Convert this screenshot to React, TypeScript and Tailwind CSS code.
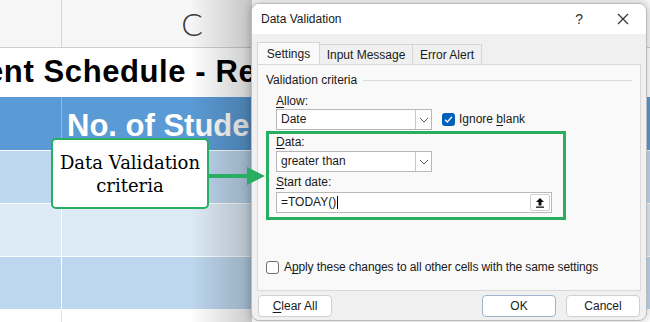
import React from "react";

const ui = { fontFamily: '"Liberation Sans", Arial, sans-serif' };
const sheetFont = { fontFamily: '"Liberation Sans", Arial, sans-serif' };

function Chevron() {
  return (
    <svg width="10" height="6" viewBox="0 0 10 6" fill="none">
      <path d="M1 1l4 4 4-4" stroke="#606060" strokeWidth="1" />
    </svg>
  );
}

function Select({ value, width }: { value: string; width: number }) {
  return (
    <div
      className="flex h-[21px] items-stretch border border-[#b8b8b8] bg-white"
      style={{ width }}
    >
      <span className="flex flex-1 items-center pl-[4px] text-[12px] text-[#1a1a1a]">
        {value}
      </span>
      <span className="flex w-[16px] items-center justify-center border-l border-[#c8c8c8]">
        <Chevron />
      </span>
    </div>
  );
}

function U({ children }: { children: React.ReactNode }) {
  return <span className="underline underline-offset-2">{children}</span>;
}

function Sheet() {
  return (
    <div className="flex h-full flex-col" style={sheetFont}>
      {/* column header */}
      <div className="flex h-[48px] border-b border-[#cfcfcf] bg-[#f6f6f6]">
        <div className="w-[62px] border-r border-[#d6d6d6]" />
        <div
          className="flex w-[260px] items-center justify-center text-[32px] font-light text-[#3a3a3a]"
          style={{ fontFamily: 'Lato, sans-serif' }}
        >
          C
        </div>
      </div>
      {/* title row */}
      <div className="flex h-[49px] items-center overflow-hidden bg-white">
        <span className="-ml-[14px] shrink-0 whitespace-nowrap text-[31px] font-bold tracking-[0.6px] text-black">
          ent Schedule - Report
        </span>
      </div>
      {/* header row */}
      <div className="flex h-[53px] overflow-hidden bg-[#5b9bd5]">
        <div className="w-[62px] shrink-0 border-r border-[#8dbbe5]" />
        <span className="shrink-0 pl-[5px] pt-[6px] whitespace-nowrap text-[31px] font-bold text-white">
          No. of Students
        </span>
      </div>
      {["bg-[#bdd7ee]", "bg-[#ddebf7]", "bg-[#bdd7ee]"].map((c, i) => (
        <div key={i} className={`flex h-[53px] border-t border-white ${c}`}>
          <div className="w-[62px] border-r border-white" />
        </div>
      ))}
      <div className="flex flex-1 border-t border-white bg-white">
        <div className="w-[62px] border-r border-[#e2e2e2]" />
      </div>
    </div>
  );
}

function Dialog() {
  return (
    <div
      className="absolute left-[251px] top-[3px] flex h-[318px] w-[396px] flex-col overflow-hidden rounded-[8px] border border-[#bdbdbd] bg-[#f0f0f0] shadow-[0_0_10px_rgba(0,0,0,0.25)]"
      style={ui}
    >
      {/* title bar */}
      <div className="flex h-[30px] items-center bg-white pl-[9px] text-[12px] text-[#1a1a1a]">
        <span className="flex-1">Data Validation</span>
        <span className="mr-[34px] text-[14px] text-[#333]">?</span>
        <svg className="mr-[17px]" width="12" height="12" viewBox="0 0 12 12">
          <path d="M1 1l10 10M11 1L1 11" stroke="#333" strokeWidth="1.2" />
        </svg>
      </div>

      {/* tabs */}
      <div className="mt-[8px] flex pl-[5px] text-[12px] text-[#1a1a1a]">
        <div className="relative z-10 mb-[-1px] flex h-[22px] w-[63px] items-center justify-center border border-b-0 border-[#d6d6d6] bg-[#f9f9f9]">
          Settings
        </div>
        <div className="mt-[2px] flex h-[20px] w-[93px] items-center justify-center border border-l-0 border-b-0 border-[#d6d6d6]">
          Input Message
        </div>
        <div className="mt-[2px] flex h-[20px] w-[69px] items-center justify-center border border-l-0 border-b-0 border-[#d6d6d6]">
          Error Alert
        </div>
      </div>

      {/* panel */}
      <div className="mx-[5px] flex h-[227px] flex-col border border-[#d9d9d9] bg-[#f9f9f9] pl-[8px] text-[12px] leading-[15px] text-[#1a1a1a]">
        <div className="mt-[8px] flex items-center pr-[8px]">
          <span>Validation criteria</span>
          <div className="ml-[6px] h-px flex-1 bg-[#d9d9d9]" />
        </div>

        <div className="ml-[10px] mt-[6px]">
          <U>A</U>llow:
        </div>
        <div className="ml-[10px] flex items-center">
          <Select value="Date" width={156} />
          <span className="ml-[10px] flex h-[13px] w-[13px] items-center justify-center rounded-[3px] bg-[#005fb8]">
            <svg width="9" height="9" viewBox="0 0 9 9" fill="none">
              <path d="M1 4.8l2.3 2.2L8 1.8" stroke="#fff" strokeWidth="1.3" />
            </svg>
          </span>
          <span className="ml-[4px]">
            Ignore <U>b</U>lank
          </span>
        </div>

        <div className="mt-[1px] flex h-[89px] w-[300px] flex-col border-[3px] border-[#27ae60] pl-[7px]">
          <div className="mt-px">
            <U>D</U>ata:
          </div>
          <div className="mt-px">
            <Select value="greater than" width={156} />
          </div>
          <div className="mt-[3px]">
            <U>S</U>tart date:
          </div>
          <div className="mt-[2px] flex h-[21px] w-[276px] items-center border border-[#b8b8b8] bg-white pl-[4px]">
            <span className="flex-1">
              =TODAY()<span className="ml-px inline-block h-[13px] w-px bg-black align-middle" />
            </span>
            <span className="mr-[1px] flex h-[17px] w-[20px] items-center justify-center rounded-[2px] border border-[#cfcfcf] bg-white">
              <svg width="10" height="11" viewBox="0 0 10 11">
                <path d="M5 1L1 5h2.5v3.5h3V5H9z" fill="#111" />
                <rect x="1" y="9.5" width="8" height="1.3" fill="#111" />
              </svg>
            </span>
          </div>
        </div>

        <div className="mt-[40px] flex items-center">
          <span className="h-[13px] w-[13px] rounded-[3px] border border-[#6e6e6e] bg-white" />
          <span className="ml-[5px] tracking-[-0.1px]">
            A<U>p</U>ply these changes to all other cells with the same settings
          </span>
        </div>
      </div>

      {/* buttons */}
      <div className="mt-[4px] flex px-[6px] text-[12px] text-[#1a1a1a]">
        <button className="h-[22px] w-[74px] rounded-[4px] border border-[#d0d0d0] bg-white">
          <U>C</U>lear All
        </button>
        <div className="flex-1" />
        <button className="h-[22px] w-[74px] rounded-[4px] border border-[#9fb4cc] bg-white">
          OK
        </button>
        <button className="ml-[10px] h-[22px] w-[74px] rounded-[4px] border border-[#d0d0d0] bg-white">
          Cancel
        </button>
      </div>
    </div>
  );
}

export default function App() {
  return (
    <div className="relative h-[322px] w-[650px] overflow-hidden bg-white">
      <Sheet />

      {/* shade cast by the dialog */}
      <div className="absolute left-[190px] top-0 h-full w-[62px] bg-gradient-to-r from-transparent to-black/20" />

      {/* callout */}
      <div
        className="absolute left-[51px] top-[138px] flex h-[71px] w-[158px] flex-col items-center justify-center rounded-[5px] border-2 border-[#27ae60] bg-white text-[18px] leading-[23px] text-black"
        style={{ fontFamily: 'Georgia, "DejaVu Serif", "Liberation Serif", serif' }}
      >
        <span>Data Validation</span>
        <span>criteria</span>
      </div>

      <Dialog />

      {/* arrow */}
      <svg className="absolute left-[207px] top-[165px]" width="60" height="22" viewBox="0 0 60 22">
        <path d="M0 11h42" stroke="#27ae60" strokeWidth="4" />
        <path d="M40 2l18 9-18 9z" fill="#27ae60" />
      </svg>
    </div>
  );
}
